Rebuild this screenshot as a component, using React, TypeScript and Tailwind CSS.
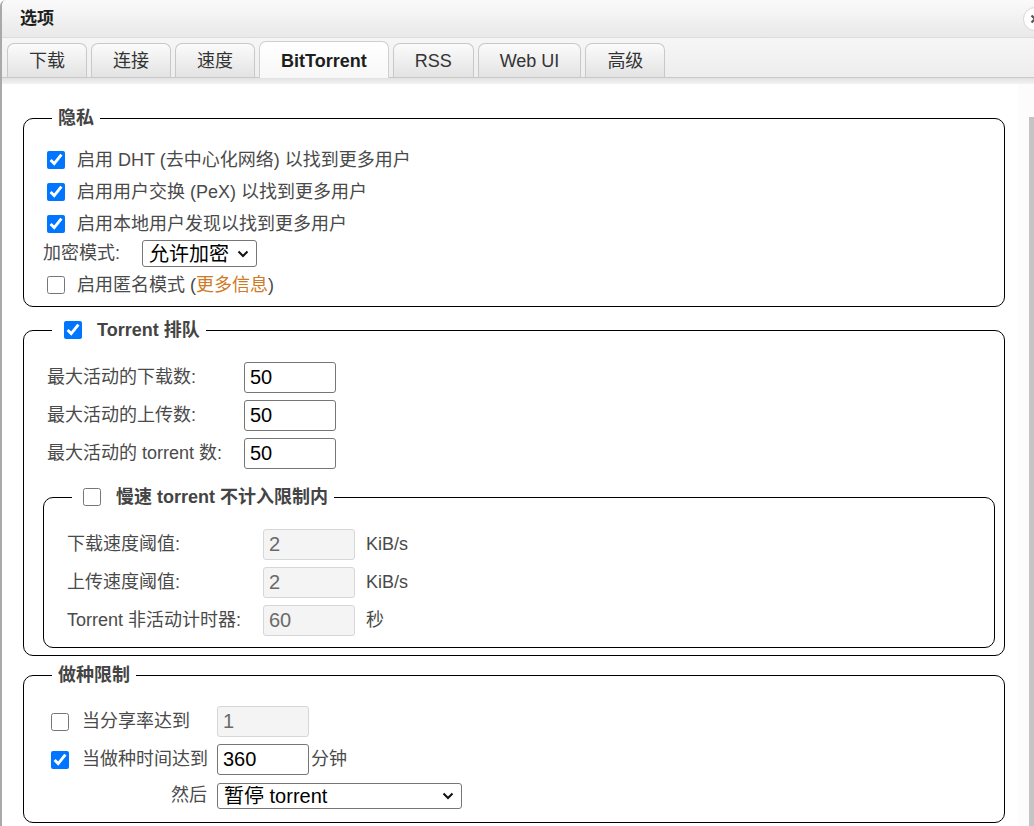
import React from 'react';

const font = "font-['Liberation_Sans','Noto_Sans_CJK_SC',sans-serif]";

function Checkbox({ checked = false, className = '' }: { checked?: boolean; className?: string }) {
  return (
    <input
      type="checkbox"
      defaultChecked={checked}
      className={`w-[18px] h-[18px] shrink-0 accent-[#0075ff] ${className}`}
    />
  );
}

function Field({ value, disabled = false }: { value: string; disabled?: boolean }) {
  return (
    <input
      type="text"
      defaultValue={value}
      disabled={disabled}
      className={`w-[92px] h-[31px] rounded-[3px] border pl-[5px] text-[20px] leading-none outline-none ${
        disabled ? 'bg-[#f4f4f4] border-[#d6d6d6] text-[#6a6a6a]' : 'bg-white border-[#767676] text-black'
      }`}
    />
  );
}

function Select({ value, width }: { value: string; width: string }) {
  return (
    <div className={`relative ${width}`}>
      <select
        defaultValue={value}
        className="w-full h-full appearance-none rounded-[3px] border border-[#767676] bg-white pl-[6px] text-[20px] leading-none text-black outline-none"
      >
        <option>{value}</option>
      </select>
      <svg
        className="pointer-events-none absolute right-[8px] top-1/2 -translate-y-1/2 w-[12px] h-[8px]"
        viewBox="0 0 12 8"
        fill="none"
        stroke="#111"
        strokeWidth={2}
      >
        <path d="M1.5 1.5 6 6l4.5-4.5" />
      </svg>
    </div>
  );
}

const tabs = ['下载', '连接', '速度', 'BitTorrent', 'RSS', 'Web UI', '高级'];

export default function App() {
  return (
    <div className={`${font} w-[1034px] h-[826px] overflow-hidden bg-white flex flex-col border-l-2 border-[#a9a9a9] rounded-tl-[6px] text-[18px] text-[#4a4a4a]`}>
      {/* Title bar */}
      <div className="h-[38px] shrink-0 flex items-center pl-[18px] overflow-hidden bg-gradient-to-b from-[#fafafa] to-[#e9e9e9] border-b border-[#dcdcdc]">
        <span className="text-[17px] font-bold text-[#1e1e1e]">选项</span>
        <div className="ml-auto mr-[-13px] w-[24px] h-[24px] rounded-full bg-white border border-[#d8d8d8] flex items-center justify-center">
          <svg className="w-[10px] h-[10px]" viewBox="0 0 10 10" stroke="#555" strokeWidth={2.2}>
            <path d="M1.5 1.5l7 7M8.5 1.5l-7 7" />
          </svg>
        </div>
      </div>

      {/* Tabs */}
      <div className="shrink-0 bg-gradient-to-b from-[#f6f6f6] to-[#ececec]">
        <div className="h-[40px] flex items-end gap-[4px] pl-[5px] border-b border-[#c9c9c9]">
          {tabs.map((t) => {
            const active = t === 'BitTorrent';
            return (
              <div
                key={t}
                className={`px-[21px] pt-[2px] flex items-center border border-b-0 rounded-t-[7px] ${
                  active
                    ? 'h-[37px] font-bold text-[#1e1e1e] border-[#cfcfcf] bg-gradient-to-b from-white to-[#f7f7f7] mb-[-1px]'
                    : 'h-[34px] text-[#333] border-[#c8c8c8] bg-gradient-to-b from-[#fbfbfb] to-[#e3e3e3]'
                }`}
              >
                {t}
              </div>
            );
          })}
        </div>
        <div className="h-[6px] bg-gradient-to-b from-[#e2e2e2] to-[#f3f3f3]" />
      </div>

      {/* Content */}
      <div className="flex-1 flex min-h-0">
        <div className="flex-1 pl-[21px] pr-[13px] pt-[22px]">
          {/* 隐私 */}
          <fieldset className="rounded-[10px] border border-black">
            <legend className="ml-[28px] px-[6px] h-6 leading-6 font-bold text-[#444]">隐私</legend>
            <div className="pl-[19px] pt-[14px] pb-[5px]">
              <div className="h-8 flex items-center">
                <Checkbox checked className="ml-1 mr-[12px]" />
                <span>启用 DHT (去中心化网络) 以找到更多用户</span>
              </div>
              <div className="h-8 flex items-center">
                <Checkbox checked className="ml-1 mr-[12px]" />
                <span>启用用户交换 (PeX) 以找到更多用户</span>
              </div>
              <div className="h-8 flex items-center">
                <Checkbox checked className="ml-1 mr-[12px]" />
                <span>启用本地用户发现以找到更多用户</span>
              </div>
              <div className="h-[27px] flex items-center">
                <span className="w-[99px]">加密模式:</span>
                <Select value="允许加密" width="w-[115px] h-[27px]" />
              </div>
              <div className="mt-[2px] h-8 flex items-center">
                <Checkbox className="ml-1 mr-[12px]" />
                <span>
                  启用匿名模式 (<span className="text-[#cf7a26]">更多信息</span>)
                </span>
              </div>
            </div>
          </fieldset>

          {/* Torrent 排队 */}
          <fieldset className="mt-[10px] rounded-[10px] border border-black">
            <legend className="ml-[28px] px-[6px] h-[26px] flex items-center font-bold text-[#444]">
              <Checkbox checked className="ml-[6px] mr-[15px]" />
              <span>Torrent 排队</span>
            </legend>
            <div className="pl-[23px] pr-[9px] pt-[19px] pb-[7px]">
              <div className="flex flex-col gap-[7px]">
                {['最大活动的下载数:', '最大活动的上传数:', '最大活动的 torrent 数:'].map((l) => (
                  <div key={l} className="flex items-center">
                    <span className="w-[197px]">{l}</span>
                    <Field value="50" />
                  </div>
                ))}
              </div>

              <fieldset className="mt-[15px] ml-[-4px] rounded-[10px] border border-black">
                <legend className="ml-[28px] px-[6px] h-[26px] flex items-center font-bold text-[#444]">
                  <Checkbox className="ml-[5px] mr-[15px]" />
                  <span>慢速 torrent 不计入限制内</span>
                </legend>
                <div className="pl-[23px] pt-[19px] pb-[11px] flex flex-col gap-[7px]">
                  {[
                    ['下载速度阈值:', '2', 'KiB/s'],
                    ['上传速度阈值:', '2', 'KiB/s'],
                    ['Torrent 非活动计时器:', '60', '秒'],
                  ].map(([l, v, u]) => (
                    <div key={l} className="flex items-center">
                      <span className="w-[196px]">{l}</span>
                      <Field value={v} disabled />
                      <span className="ml-[11px]">{u}</span>
                    </div>
                  ))}
                </div>
              </fieldset>
            </div>
          </fieldset>

          {/* 做种限制 */}
          <fieldset className="mt-[7px] rounded-[10px] border border-black">
            <legend className="ml-[28px] px-[6px] h-6 leading-6 font-bold text-[#444]">做种限制</legend>
            <div className="pl-[27px] pt-[19px] pb-[13px] flex flex-col gap-[7px]">
              <div className="flex items-center">
                <div className="w-[166px] flex items-center">
                  <Checkbox className="mr-[13px]" />
                  <span>当分享率达到</span>
                </div>
                <Field value="1" disabled />
              </div>
              <div className="flex items-center">
                <div className="w-[166px] flex items-center">
                  <Checkbox checked className="mr-[13px]" />
                  <span>当做种时间达到</span>
                </div>
                <Field value="360" />
                <span className="ml-[2px]">分钟</span>
              </div>
              <div className="flex items-center">
                <span className="w-[166px] pr-[10px] text-right">然后</span>
                <Select value="暂停 torrent" width="w-[245px] h-[26px]" />
              </div>
            </div>
          </fieldset>
        </div>

        {/* Scrollbar */}
        <div className="w-[16px] shrink-0 flex flex-col bg-[#fcfcfc]">
          <div className="ml-[11px] mt-[33px] flex-1 bg-[#c4c4c4]" />
        </div>
      </div>
    </div>
  );
}
